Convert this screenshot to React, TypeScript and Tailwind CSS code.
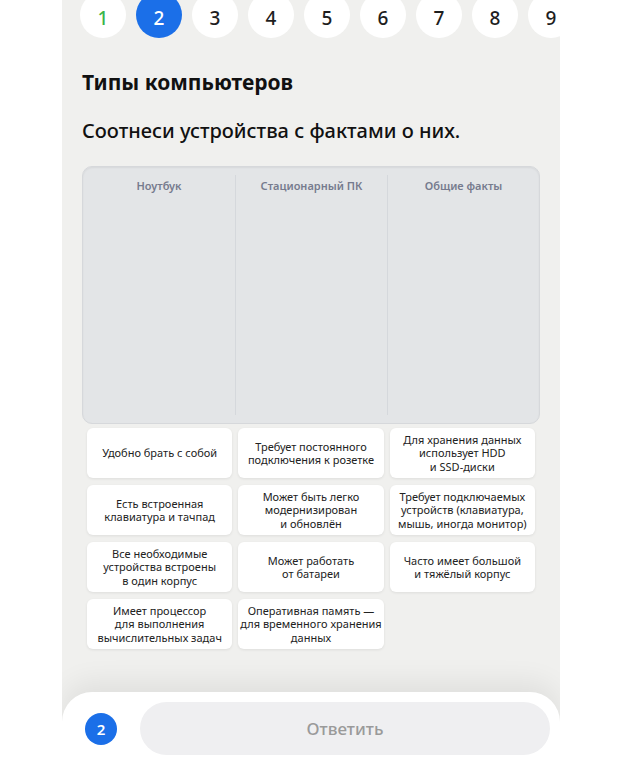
import React from 'react';

const facts: React.ReactNode[] = [
  <>Удобно брать с собой</>,
  <>Требует постоянного<br />подключения к розетке</>,
  <>Для хранения данных<br />использует HDD<br />и SSD-диски</>,
  <>Есть встроенная<br />клавиатура и тачпад</>,
  <>Может быть легко<br />модернизирован<br />и обновлён</>,
  <>Требует подключаемых<br />устройств (клавиатура,<br />мышь, иногда монитор)</>,
  <>Все необходимые<br />устройства встроены<br />в один корпус</>,
  <>Может работать<br />от батареи</>,
  <>Часто имеет большой<br />и тяжёлый корпус</>,
  <>Имеет процессор<br />для выполнения<br />вычислительных задач</>,
  <>Оперативная память —<br />для временного хранения<br />данных</>,
];

const columns = ['Ноутбук', 'Стационарный ПК', 'Общие факты'];

const App: React.FC = () => {
  return (
    <div className="w-[621px] h-[762px] bg-white overflow-hidden" style={{ fontFamily: '"Noto Sans", "Open Sans", sans-serif' }}>
      <div className="ml-[62px] w-[498px] h-[762px] bg-[#f0f0ee] flex flex-col overflow-hidden">
        {/* step circles */}
        <div className="flex gap-[10px] pl-[18px] -mt-2 shrink-0">
          {[1, 2, 3, 4, 5, 6, 7, 8, 9].map((n) => (
            <div
              key={n}
              className={
                n === 2
                  ? 'w-[46px] h-[46px] shrink-0 rounded-full bg-[#1b6fe8] text-white flex items-center justify-center text-[19px] font-medium'
                  : n === 1
                  ? 'w-[46px] h-[46px] shrink-0 rounded-full bg-white text-[#3bb54a] flex items-center justify-center text-[19px] font-medium'
                  : 'w-[46px] h-[46px] shrink-0 rounded-full bg-white text-[#1e1e1e] flex items-center justify-center text-[19px] font-medium'
              }
            >
              <span className="mt-[6px]">{n}</span>
            </div>
          ))}
        </div>

        <div className="px-5">
          <h1 className="mt-[30px] text-[21px] leading-[28px] font-bold text-[#111]">Типы компьютеров</h1>
          <p className="mt-[22px] text-[20px] leading-[26px] font-medium text-[#111]">
            Соотнеси устройства с фактами о них.
          </p>

          {/* drop table */}
          <div className="mt-[22px] h-[258px] rounded-[10px] bg-[#e3e5e7] border border-[#d6d8db] shadow-[inset_0_1px_2px_rgba(0,0,0,0.06)] grid grid-cols-3 py-2">
            {columns.map((c, i) => (
              <div key={c} className={i > 0 ? 'border-l border-[#d5d8dc] pt-1' : 'pt-1'}>
                <div className="text-center text-[11px] leading-[14px] font-semibold text-[#767b8e]">{c}</div>
              </div>
            ))}
          </div>

          {/* fact cards */}
          <div className="grid grid-cols-3 gap-x-[6px] gap-y-[7px] px-[5px] mt-1">
            {facts.map((f, i) => (
              <div
                key={i}
                className="h-[50px] rounded-[6px] bg-white shadow-[0_1px_3px_rgba(0,0,0,0.08)] flex items-center justify-center text-center text-[11px] leading-[13.5px] text-[#222]"
              >
                <span>{f}</span>
              </div>
            ))}
          </div>
        </div>

        {/* bottom bar */}
        <div className="mt-auto h-[70px] shrink-0 bg-white rounded-t-[30px] shadow-[0_-10px_28px_rgba(0,0,0,0.07)] flex items-start gap-[23px] pl-[23px] pr-[10px] pt-[10px]">
          <div className="mt-[11px] w-8 h-8 rounded-full bg-[#1b6fe8] text-white flex items-center justify-center text-[15px] font-semibold shrink-0">
            2
          </div>
          <button className="flex-1 h-[53px] rounded-full bg-[#efeff1] text-[#9a9a9a] text-[17px] font-medium">
            Ответить
          </button>
        </div>
      </div>
    </div>
  );
};

export default App;
